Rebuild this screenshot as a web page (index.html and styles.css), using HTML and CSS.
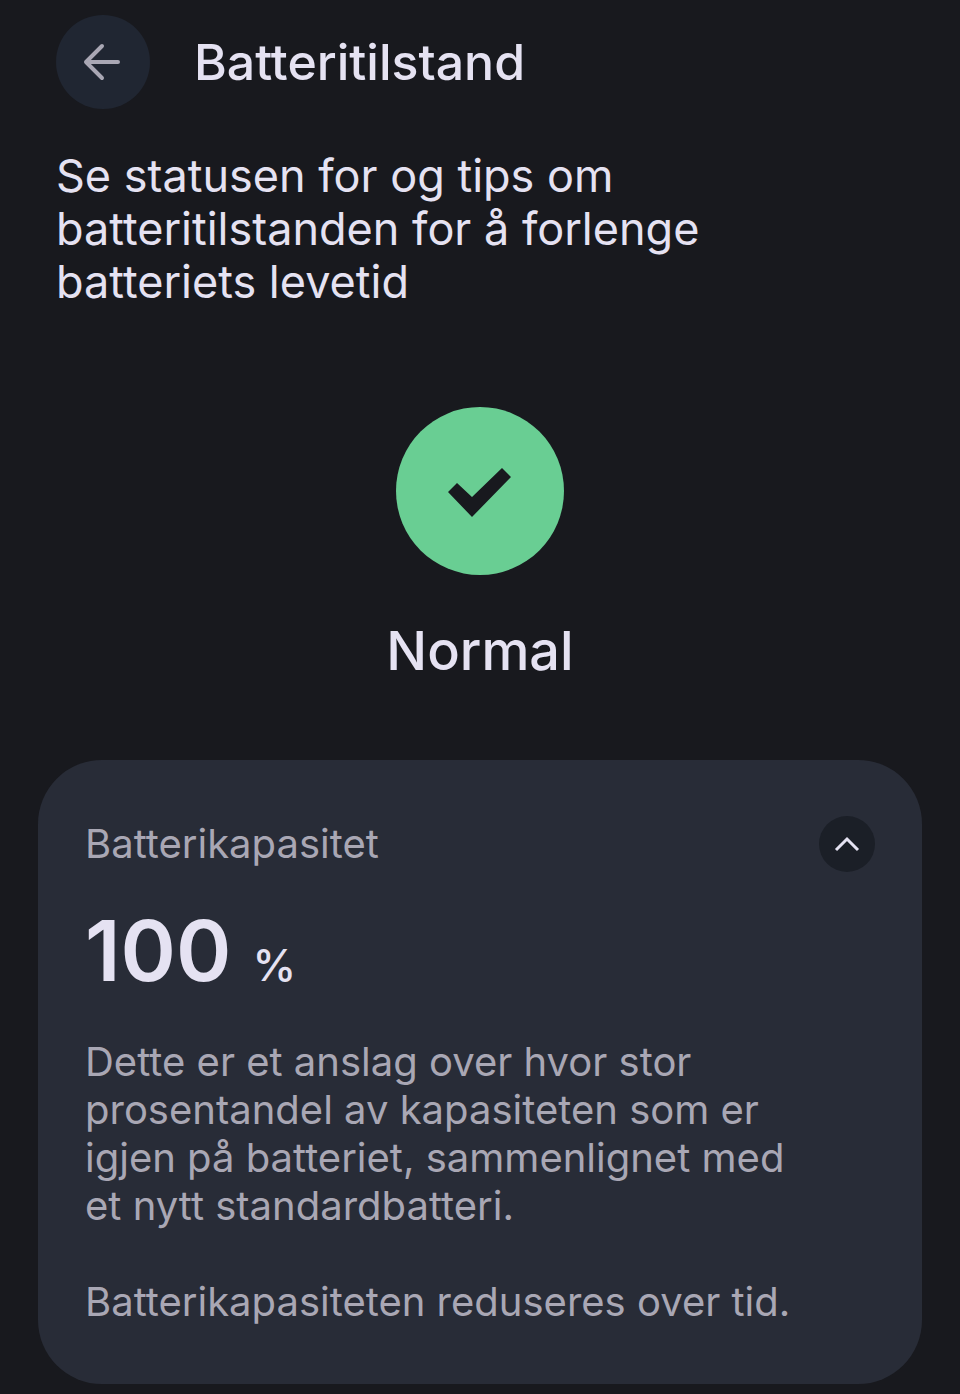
FILE: index.html
```
<!DOCTYPE html>
<html lang="no">
<head>
    <meta charset="utf-8">
    <meta name="viewport" content="width=device-width, initial-scale=1">
    <title>Batteritilstand</title>
    <link rel="stylesheet" href="styles.css">
</head>
<body>
    <header class="topbar">
        <button class="back" type="button" aria-label="Tilbake">
            <svg width="40" height="40" viewBox="0 0 40 40">
                <path d="M35 20H3M19 4L3 20l16 16" fill="none" stroke="currentColor" stroke-width="4" stroke-linecap="round" stroke-linejoin="round"/>
            </svg>
        </button>
        <h1>Batteritilstand</h1>
    </header>
    <main>
        <p class="intro">Se statusen for og tips om batteritilstanden for å forlenge batteriets levetid</p>
        <section class="status">
            <svg class="check" width="168" height="168" viewBox="0 0 168 168">
                <circle cx="84" cy="84" r="84" fill="#69ce93"/>
                <path d="M52 85l9-9 15 14 30-29 9 9-39 40z" fill="#18191e"/>
            </svg>
            <h2>Normal</h2>
        </section>
        <section class="card">
            <div class="card-head">
                <h3>Batterikapasitet</h3>
                <button class="toggle" type="button" aria-label="Skjul" aria-expanded="true">
                    <svg width="28" height="28" viewBox="0 0 28 28">
                        <path d="M3 20L14 9l11 11" fill="none" stroke="currentColor" stroke-width="3"/>
                    </svg>
                </button>
            </div>
            <div class="value">100 <span class="unit">%</span></div>
            <p>Dette er et anslag over hvor stor prosentandel av kapasiteten som er igjen på batteriet, sammenlignet med et nytt standardbatteri.</p>
            <p>Batterikapasiteten reduseres over tid.</p>
        </section>
    </main>
</body>
</html>
```
FILE: styles.css
```
* {
    box-sizing: border-box;
}
body {
    margin: 0;
    padding: 15px 38px 12px;
    background: #18191e;
    color: #e5e2f2;
    font-family: "Inter", "Open Sans", sans-serif;
}
h1, h2, h3, p {
    margin: 0;
    font-weight: 400;
}
button {
    display: flex;
    align-items: center;
    justify-content: center;
    border: none;
    border-radius: 50%;
    padding: 0;
}
.topbar {
    display: flex;
    align-items: center;
    gap: 44px;
    padding: 0 18px;
}
.back {
    width: 94px;
    height: 94px;
    background: #202632;
    color: #a9a7b4;
}
h1 {
    font-size: 50px;
    line-height: 60px;
    font-weight: 500;
}
.intro {
    max-width: 720px;
    margin-top: 40px;
    padding: 0 18px;
    font-size: 45px;
    line-height: 53px;
}
.status {
    display: flex;
    flex-direction: column;
    align-items: center;
    gap: 42px;
    margin-top: 99px;
}
h2 {
    font-size: 54px;
    line-height: 68px;
    font-weight: 500;
}
.card {
    margin-top: 75px;
    padding: 56px 47px 58px;
    border-radius: 64px;
    background: #282c37;
    color: #a9a7b4;
}
.card-head {
    display: flex;
    align-items: center;
    justify-content: space-between;
}
h3, .card p {
    font-size: 40px;
    line-height: 48px;
}
.toggle {
    width: 56px;
    height: 56px;
    background: #1b1f27;
    color: #e5e2f2;
}
.value {
    margin: 25px 0 19px;
    color: #e5e2f2;
    font-size: 84px;
    line-height: 108px;
    font-weight: 600;
}
.unit {
    font-size: 44px;
    font-weight: 500;
}
.card p {
    max-width: 720px;
}
.card p + p {
    margin-top: 48px;
}
```
